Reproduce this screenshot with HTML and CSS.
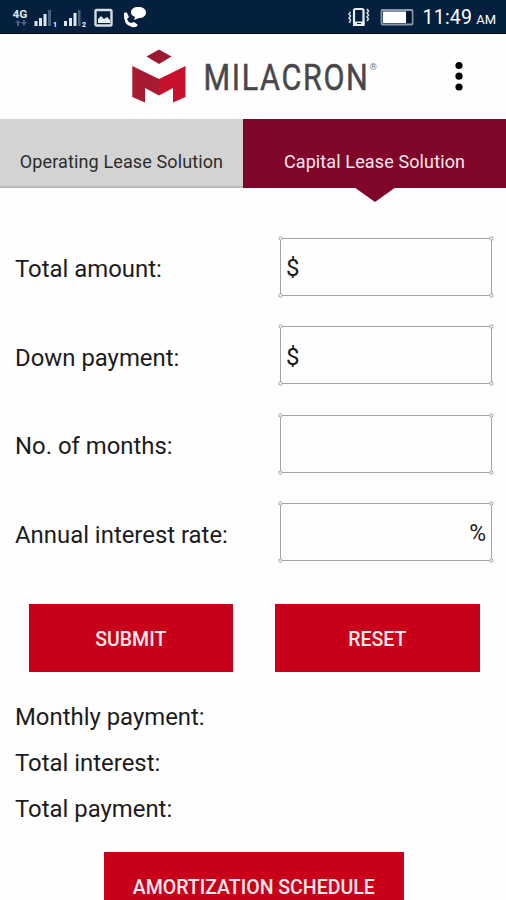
FILE: index.html
```html
<!DOCTYPE html>
<html lang="en">
<head>
  <meta charset="UTF-8" />
  <meta name="viewport" content="width=device-width, initial-scale=1.0"/>
  <title>Milacron Lease Calculator</title>
  <link rel="stylesheet" href="styles.css">
</head>
<body>

  <div class="status-bar">
    <svg class="status-left" width="160" height="33" viewBox="0 0 160 33">
      <text x="12.500" y="18" class="net" textLength="15" lengthAdjust="spacingAndGlyphs">4G</text>
      <path d="M15 23l3-3 3 3h-2v3h-2v-3zM21 22h2v-2h2v2h2l-3 4z" fill="#49617e"/>
      <g fill="#dfe5ec">
        <path d="M34.500 21h3v5h-3zM39 18h3v8h-3zM43.500 14h3v12h-3z"/>
        <path d="M64 21h3v5h-3zM69 18h3v8h-3zM73.500 13h3v13h-3z"/>
      </g>
      <path d="M48 10h3v16h-3zM78 10h2.500v16H78z" fill="#49617e"/>
      <text x="53" y="27" class="sim">1</text>
      <text x="82" y="27" class="sim">2</text>
      <rect x="95.500" y="10" width="16" height="15.500" rx="1" fill="none" stroke="#d5dce3" stroke-width="2.400"/>
      <path d="M98 23v-4l3-3 3 3 3-2 3 3v3z" fill="#e8edf1"/>
      <path d="M124 13q3-2 4 2l1 2-2 2q1 3 4 4l3-1 4 3q-2 3-6 2-9-2-8-14z" fill="#fff"/>
      <path d="M138 7c5 0 8 2 8 5.500s-3 5.500-7 5.500l-5 2 1-3c-3-1-4-3-4-4.500C131 9 134 7 138 7z" fill="#fff"/>
    </svg>
    <div class="status-right">
      <svg width="70" height="33" viewBox="0 0 70 33">
        <rect x="9" y="9" width="9.500" height="16" rx="1.500" fill="none" stroke="#e8edf1" stroke-width="2.200"/>
        <path d="M8 21.500h11.500V26H8z" fill="#e8edf1"/>
        <path d="M12 23.500h4" stroke="#05203f"/>
        <path d="M5.500 12l-1.500 2 1.500 2-1.500 2 1.500 2-1 3M22 9l1.500 2-1.500 2 1.500 2-1.500 2 1.500 2-1.500 2" fill="none" stroke="#d5dce3" stroke-width="1.500"/>
        <rect x="36.500" y="10" width="31" height="14.500" rx="1" fill="none" stroke="#8997a8" stroke-width="1.800"/>
        <path d="M38 11.500h23v11.500H38z" fill="#fff"/>
        <path d="M62 12h4.500v10.500H62z" fill="#061426"/>
      </svg>
      <span class="time">11:49</span><span class="ampm">AM</span>
    </div>
  </div>

  <div class="header">
    <svg class="logo" width="260" height="60" viewBox="130 46 260 60">
      <path d="M159 49.500l12.500 7-12.500 7.500-12.500-7.500z" fill="#9c1930"/>
      <path d="M132.300 66L159 79v16.500L145 88v14.500L132.300 97z" fill="#a81a31"/>
      <path d="M185.500 66L159 79v16.500l14-7.500v14.500l12.500-5.500z" fill="#c8102e"/>
      <text x="203.500" y="90.300" class="brand" textLength="166" lengthAdjust="spacingAndGlyphs">MILACRON</text>
      <text x="369.800" y="69.500" class="reg">®</text>
    </svg>
    <svg class="menu" width="10" height="32" viewBox="0 0 10 32">
      <circle cx="5" cy="5.500" r="3.600"/>
      <circle cx="5" cy="16.200" r="3.600"/>
      <circle cx="5" cy="27" r="3.600"/>
    </svg>
  </div>

  <div class="tabs">
    <div class="tab">Operating Lease Solution</div>
    <div class="tab active">Capital Lease Solution</div>
  </div>

  <form class="lease-form">
    <div class="row">
      <label for="amount">Total amount:</label>
      <div class="field"><span>$</span><input type="text" id="amount"></div>
    </div>
    <div class="row">
      <label for="down">Down payment:</label>
      <div class="field"><span>$</span><input type="text" id="down"></div>
    </div>
    <div class="row">
      <label for="months">No. of months:</label>
      <div class="field"><input type="text" id="months"></div>
    </div>
    <div class="row">
      <label for="rate">Annual interest rate:</label>
      <div class="field"><input type="text" id="rate"><span class="percent">%</span></div>
    </div>
    <div class="buttons">
      <button type="button">SUBMIT</button>
      <button type="reset">RESET</button>
    </div>
  </form>

  <div class="results">
    <div>Monthly payment:</div>
    <div>Total interest:</div>
    <div>Total payment:</div>
  </div>

  <button class="schedule" type="button">AMORTIZATION SCHEDULE</button>

</body>
</html>
```
FILE: styles.css
```css
* {
  box-sizing: border-box;
}

body {
  margin: 0;
  height: 900px;
  overflow: hidden;
  background: #fefefe;
  color: #1c1c1c;
  font-family: Roboto, sans-serif;
}

.status-bar {
  display: flex;
  justify-content: space-between;
  height: 34px;
  background: #05203f;
  border-bottom: 1px solid #080c14;
  color: #fff;
}

.status-right {
  display: flex;
  align-items: baseline;
  padding-right: 10px;
}

.status-right svg {
  align-self: flex-start;
  margin-right: 8px;
}

.time {
  font-size: 19.500px;
  line-height: 36px;
  letter-spacing: 0.2px;
}

.ampm {
  font-size: 13px;
  margin-left: 4px;
}

.net {
  font-size: 10px;
  font-weight: bold;
  fill: #dfe5ec;
}

.sim {
  font-size: 7px;
  font-weight: bold;
  fill: #fff;
}

.header {
  display: flex;
  justify-content: space-between;
  align-items: flex-start;
  height: 85px;
  padding: 12px 42px 0 130px;
}

.menu {
  margin-top: 14px;
}

.brand {
  font-size: 37px;
  letter-spacing: 2px;
  fill: #48484a;
  stroke: #48484a;
  stroke-width: 0.5px;
}

.reg {
  font-size: 9px;
  fill: #777;
}

.tabs {
  display: flex;
  height: 69px;
}

.tab {
  width: 243px;
  padding-top: 32px;
  background: #d3d3d3;
  border-bottom: 2px solid #bbb;
  color: #2c2c2c;
  text-align: center;
  font-size: 18px;
  line-height: 21px;
  letter-spacing: 0.12px;
  white-space: nowrap;
}

.tab.active {
  position: relative;
  width: 263px;
  background: #7f0629;
  border-bottom: none;
  color: #f6e9ed;
}

.tab.active::after {
  content: "";
  position: absolute;
  left: 111px;
  top: 68px;
  border: 21px solid transparent;
  border-top: 15px solid #7f0629;
  border-bottom: none;
}

.lease-form {
  padding: 50px 14px 0 15px;
}

.row {
  display: flex;
  justify-content: space-between;
  align-items: center;
  height: 57px;
  margin-bottom: 31.500px;
}

.row label,
.results {
  font-size: 23.900px;
}

.row label {
  padding-top: 5px;
}

.field {
  display: flex;
  align-items: center;
  position: relative;
  width: 212px;
  height: 58px;
  padding: 3px 5px 0;
  border: 1px solid #a5a5a5;
  font-size: 24px;
}

/* small round handles on the corners */
.field::after {
  content: "";
  position: absolute;
  inset: -3px;
  pointer-events: none;
  background:
    radial-gradient(circle, #e4e4e4 1px, #a5a5a5 1.500px, transparent 2.500px) 0 0 / 5px 5px no-repeat,
    radial-gradient(circle, #e4e4e4 1px, #a5a5a5 1.500px, transparent 2.500px) 100% 0 / 5px 5px no-repeat,
    radial-gradient(circle, #e4e4e4 1px, #a5a5a5 1.500px, transparent 2.500px) 0 100% / 5px 5px no-repeat,
    radial-gradient(circle, #e4e4e4 1px, #a5a5a5 1.500px, transparent 2.500px) 100% 100% / 5px 5px no-repeat;
}

.field input {
  flex: 1;
  min-width: 0;
  border: none;
  outline: none;
  background: transparent;
  font: inherit;
}

.percent {
  font-size: 23px;
}

.buttons {
  display: flex;
  gap: 42px;
  padding: 12px 0 0 13.500px;
}

button {
  height: 68px;
  border: none;
  background: #c8001a;
  color: #fbe9eb;
  font-family: inherit;
  font-size: 19.500px;
  font-weight: 500;
  padding: 2px 0 0;
}

.buttons button {
  width: 204.500px;
}

.results {
  padding: 22px 15px 0;
  line-height: 46px;
}

.schedule {
  display: block;
  width: 300.500px;
  margin: 20px 0 0 103.500px;
}
```
